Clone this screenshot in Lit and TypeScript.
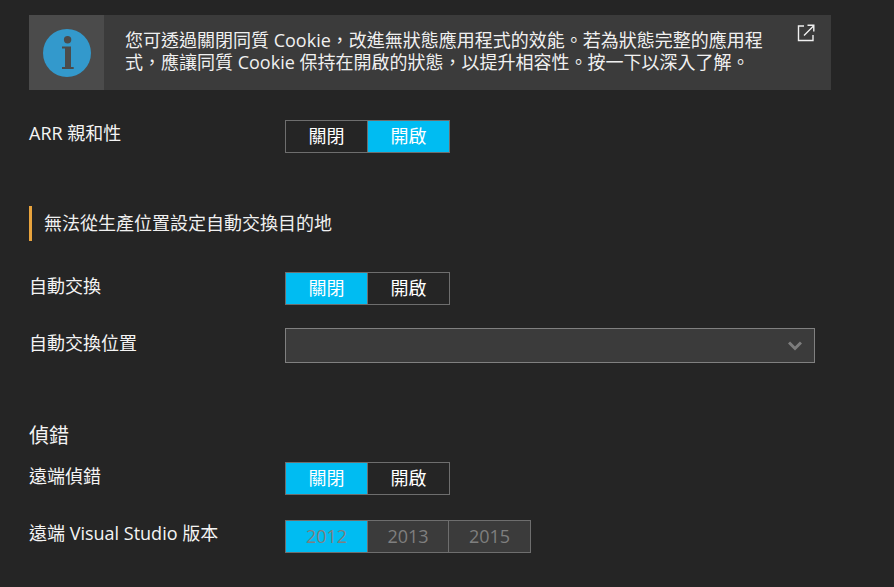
import { LitElement, html, css } from "lit";
import { customElement, property } from "lit/decorators.js";
import { classMap } from "lit/directives/class-map.js";

@customElement("seg-toggle")
export class SegToggle extends LitElement {
  @property({ attribute: false })
  options: string[] = [];

  @property({ type: Number })
  selected = 0;

  @property({ type: Boolean })
  disabled = false;

  render() {
    return html`<div class=${classMap({ seg: true, disabled: this.disabled })}>
      ${this.options.map(
        (o, i) =>
          html`<div class=${classMap({ opt: true, on: i === this.selected })}>${o}</div>`
      )}
    </div>`;
  }

  static styles = css`
    :host {
      display: block;
    }

    .seg {
      display: inline-flex;
      height: 33px;
      box-sizing: border-box;
      border: 1px solid #6e6e6e;
      font-size: 18px;
      color: #fff;
    }

    .opt {
      width: 81px;
      display: flex;
      align-items: center;
      justify-content: center;
      box-sizing: border-box;
      padding-bottom: 3px;
      background: #252525;
    }

    .opt:last-child {
      width: 82px;
    }

    .opt + .opt {
      border-left: 1px solid #6e6e6e;
    }

    .on {
      background: #00bcf2;
    }

    .disabled {
      color: #7f7f7f;
    }

    .disabled .opt {
      padding-bottom: 1px;
      background: #3b3b3b;
    }

    .disabled .on {
      background: #00bcf2;
    }
  `;
}

@customElement("app-root")
export class AppRoot extends LitElement {
  render() {
    return html`<div class="page">
      <div class="banner">
        <div class="banner-icon">
          <svg width="48" height="48" viewBox="0 0 48 48">
            <circle cx="24" cy="24" r="24" fill="#3399cc" />
            <circle cx="24.6" cy="10.8" r="3.7" fill="#4b4b4b" />
            <path
              d="M19 17.5h9v20.5h2.7v2H19v-2h3v-18.5h-3z"
              fill="#4b4b4b"
            />
          </svg>
        </div>
        <div class="banner-text">
          您可透過關閉同質 Cookie，改進無狀態應用程式的效能。若為狀態完整的應用程式，應讓同質 Cookie 保持在開啟的狀態，以提升相容性。按一下以深入了解。
        </div>
        <svg class="launch" width="18" height="18" viewBox="0 0 18 18" fill="none" stroke="#f0f0f0" stroke-width="1.4">
          <path d="M7 2H1.5v14.5H16V11" />
          <path d="M7 11.5L16.5 2M10.5 1.2h6.3v6.3" />
        </svg>
      </div>

      <div class="row arr">
        <div class="label">ARR 親和性</div>
        <seg-toggle .options=${["關閉", "開啟"]} selected="1"></seg-toggle>
      </div>

      <div class="notice">無法從生產位置設定自動交換目的地</div>

      <div class="row swap">
        <div class="label">自動交換</div>
        <seg-toggle .options=${["關閉", "開啟"]} selected="0"></seg-toggle>
      </div>

      <div class="row slot">
        <div class="label">自動交換位置</div>
        <div class="select">
          <svg width="14" height="10" viewBox="0 0 14 10" fill="none" stroke="#7d7d7d" stroke-width="3">
            <path d="M1 1.5l6 6 6-6" />
          </svg>
        </div>
      </div>

      <div class="heading">偵錯</div>

      <div class="row debug">
        <div class="label">遠端偵錯</div>
        <seg-toggle .options=${["關閉", "開啟"]} selected="0"></seg-toggle>
      </div>

      <div class="row version">
        <div class="label">遠端 Visual Studio 版本</div>
        <seg-toggle .options=${["2012", "2013", "2015"]} selected="0" disabled></seg-toggle>
      </div>
    </div>`;
  }

  static styles = css`
    :host {
      display: block;
      height: 587px;
      overflow: hidden;
      background: #252525;
      color: #fff;
      font-family: "Open Sans", "Noto Sans CJK TC", sans-serif;
    }

    .page {
      padding: 15px 0 0 29px;
      display: flex;
      flex-direction: column;
    }

    .banner {
      position: relative;
      width: 802px;
      height: 75px;
      background: #3b3b3b;
      display: flex;
    }

    .banner-icon {
      width: 75px;
      flex: none;
      background: #4b4b4b;
      display: flex;
      align-items: center;
      justify-content: center;
    }

    .banner-text {
      width: 648px;
      margin: 14px 0 0 21px;
      font-size: 18px;
      line-height: 22px;
      color: #f0f0f0;
    }

    .launch {
      position: absolute;
      top: 9px;
      right: 16px;
    }

    .row {
      display: flex;
      align-items: flex-start;
    }

    .label {
      width: 256px;
      flex: none;
      padding-top: 1px;
      font-size: 18px;
      line-height: 24px;
      color: #f4f4f4;
    }

    .arr {
      margin-top: 30px;
    }

    .notice {
      margin-top: 53px;
      height: 35px;
      box-sizing: border-box;
      border-left: 3px solid #e8a33d;
      padding-left: 12px;
      font-size: 18px;
      line-height: 35px;
      color: #f0f0f0;
    }

    .swap {
      margin-top: 31px;
    }

    .swap .label,
    .debug .label {
      padding-top: 2px;
    }

    .slot {
      margin-top: 23px;
    }

    .slot .label {
      padding-top: 3px;
    }

    .select {
      width: 530px;
      height: 35px;
      box-sizing: border-box;
      border: 1px solid #808080;
      background: #3b3b3b;
      display: flex;
      align-items: center;
      justify-content: flex-end;
      padding-right: 12px;
    }

    .heading {
      margin-top: 60px;
      font-size: 20px;
      line-height: 26px;
      color: #f4f4f4;
    }

    .debug {
      margin-top: 13px;
    }

    .version {
      margin-top: 25px;
    }
  `;
}
